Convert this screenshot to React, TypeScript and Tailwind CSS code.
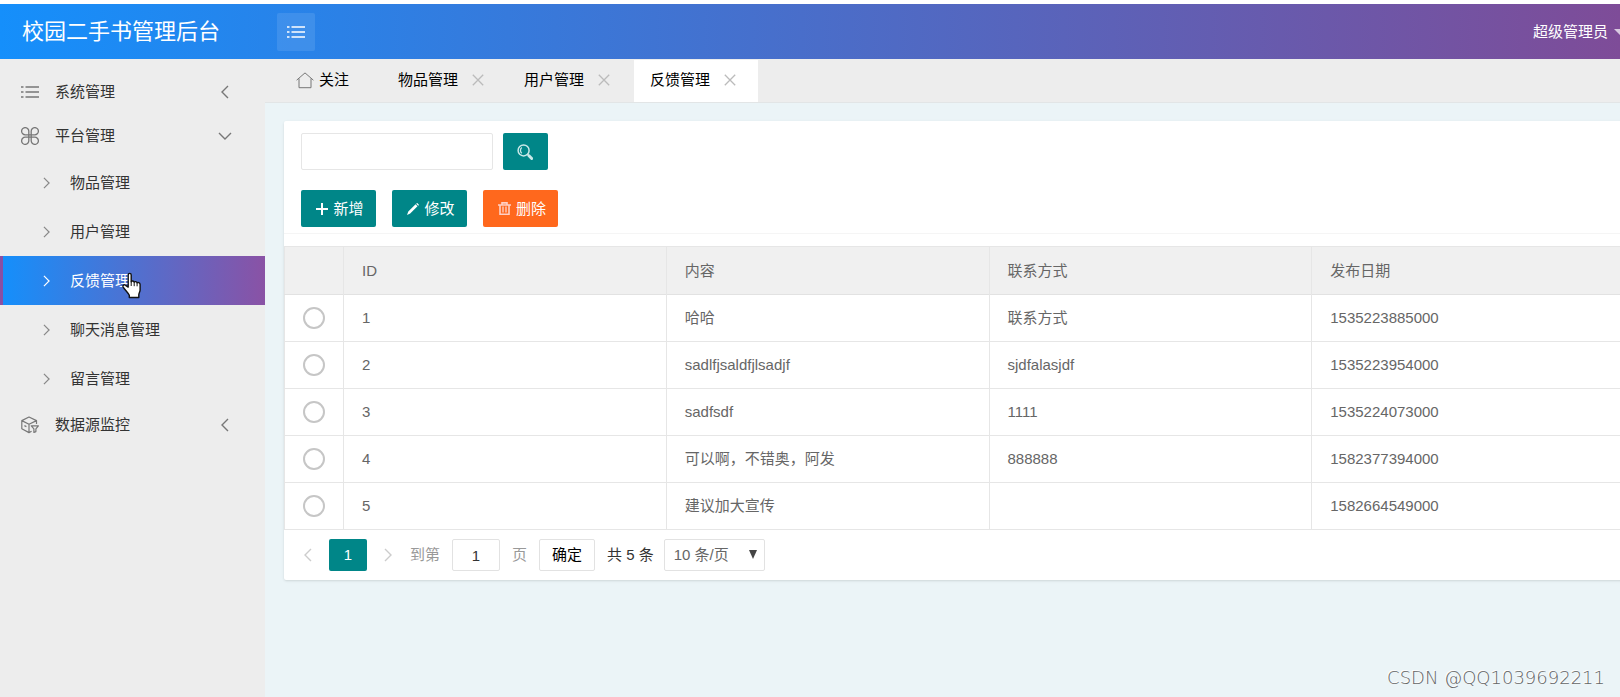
import React, { useState } from 'react';
import clsx from 'clsx';

const subMenus = ['物品管理', '用户管理', '反馈管理', '聊天消息管理', '留言管理'];

const tabs = ['物品管理', '用户管理', '反馈管理'];

const columns = ['ID', '内容', '联系方式', '发布日期'];

const rows = [
  { id: 1, content: '哈哈', contact: '联系方式', date: '1535223885000' },
  { id: 2, content: 'sadlfjsaldfjlsadjf', contact: 'sjdfalasjdf', date: '1535223954000' },
  { id: 3, content: 'sadfsdf', contact: '1111', date: '1535224073000' },
  { id: 4, content: '可以啊，不错奥，阿发', contact: '888888', date: '1582377394000' },
  { id: 5, content: '建议加大宣传', contact: '', date: '1582664549000' },
];

interface IconProps {
  className?: string;
}

const ListIcon = ({ className }: IconProps) => (
  <svg viewBox="0 0 18 14" fill="none" stroke="currentColor" className={className}>
    <path d="M0 2h2.500M0 7h2.500M0 12h2.500M4.500 2h13.500M4.500 7h13.500M4.500 12h13.500" strokeWidth="1.3" />
  </svg>
);

const CloverIcon = ({ className }: IconProps) => (
  <svg viewBox="0 0 18 18" fill="none" stroke="currentColor" strokeWidth="1.3" className={className}>
    <path d="M7.8 7.8V4.3A3.6 3.6 0 1 0 4.3 7.8H13.7A3.6 3.6 0 1 0 10.2 4.3V13.7A3.6 3.6 0 1 0 13.7 10.2H4.3A3.6 3.6 0 1 0 7.8 13.7V7.8" />
  </svg>
);

const CubeIcon = ({ className }: IconProps) => (
  <svg viewBox="0 0 18 18" fill="none" stroke="currentColor" strokeWidth="1.2" strokeLinejoin="round" className={className}>
    <path d="M15.5 8V4.6L8 1 .8 4.6v8.2L8 16.6l2.6-1.3M.8 4.6L8 8.3l7.5-3.7M8 8.3v8.3M3.4 9.6l2 1" />
    <path d="M10.3 9.8h7.1l-2.5 3v2.8l-2 .9v-3.7z" />
  </svg>
);

const HomeIcon = ({ className }: IconProps) => (
  <svg viewBox="0 0 18 17" fill="none" stroke="currentColor" strokeWidth="1" className={className}>
    <path d="M.6 8.2L9 .9l8.4 7.3M3 6.5v9.2h12V6.5" />
  </svg>
);

const Chevron = ({ className }: IconProps) => (
  <svg viewBox="0 0 8 14" fill="none" stroke="currentColor" strokeWidth="1.4" className={className}>
    <path d="M1 1l6 6-6 6" />
  </svg>
);

const CloseIcon = ({ className }: IconProps) => (
  <svg viewBox="0 0 12 12" fill="none" stroke="currentColor" strokeWidth="1.3" className={className}>
    <path d="M.8.8l10.4 10.4M11.2.8L.8 11.2" />
  </svg>
);

const SearchIcon = ({ className }: IconProps) => (
  <svg viewBox="0 0 16 16" fill="none" stroke="currentColor" className={className}>
    <circle cx="6.6" cy="6.4" r="5.5" strokeWidth="1.5" />
    <path d="M4.8 3.6a3.6 3.6 0 0 0 0 5.6" strokeWidth="1.3" />
    <path d="M10.6 10.400l1.400 1.400" strokeWidth="1.6" />
    <path d="M12 11.800l2.700 2.700" strokeWidth="3" strokeLinecap="round" />
  </svg>
);

const PlusIcon = ({ className }: IconProps) => (
  <svg viewBox="0 0 12 12" fill="none" stroke="currentColor" strokeWidth="2" className={className}>
    <path d="M6 0v12M0 6h12" />
  </svg>
);

const PencilIcon = ({ className }: IconProps) => (
  <svg viewBox="0 0 12 12" fill="currentColor" className={className}>
    <path d="M0 12l1.300-3.400L8.600 1.300l1.900 1.900-7.300 7.400zM9.200.7l.5-.5a.6.6 0 0 1 .8 0l1.200 1.200a.6.6 0 0 1 0 .8l-.5.500z" />
  </svg>
);

const TrashIcon = ({ className }: IconProps) => (
  <svg viewBox="0 0 13 13" fill="none" stroke="currentColor" strokeWidth="1.6" className={className}>
    <path d="M0 3h13M4 3V.9h5V3M2 3v9.200h9V3" />
    <path d="M5 4.500v6M8 4.500v6" strokeWidth="1.3" />
  </svg>
);

const HandCursor = ({ className }: IconProps) => (
  <svg viewBox="0 0 20 26" fill="#fff" stroke="#111" strokeWidth="1.4" strokeLinejoin="round" className={className}>
    <path d="M6.2 14.6V2.4a1.5 1.5 0 0 1 3 0v6.8c.3-1 2.7-1 3 .5.5-.9 2.5-.8 2.9.6.8-.6 3-.3 3 1.600v5.500c0 2-1.300 3.200-1.300 5V25H7.300v-2.200C6.300 20.500 3 17.500 1.200 14.600c-.9-1.700 1-2.900 2.400-1.800z" />
    <path d="M9.200 9v4.500M12.200 9.700v4M15.100 10.300v3.500" strokeWidth="1" />
  </svg>
);

const Header = () => (
  <header className="mt-1 flex h-[55px] items-center overflow-hidden bg-linear-to-r/srgb from-[#158ffb] to-[#7e4c98] text-white">
    <h1 className="w-[277px] shrink-0 pl-[22px] text-[22px]">校园二手书管理后台</h1>
    <button type="button" aria-label="菜单" className="flex size-[38px] items-center justify-center rounded-xs bg-white/10">
      <ListIcon className="h-3.5 w-[18px]" />
    </button>
    <button type="button" className="-mr-1.5 ml-auto flex shrink-0 items-center gap-1.5">
      超级管理员
      <svg viewBox="0 0 12 6" fill="currentColor" className="h-1.5 w-3 opacity-70">
        <path d="M0 0h12L6 6z" />
      </svg>
    </button>
  </header>
);

interface MenuItemProps {
  icon: React.ReactNode;
  title: string;
  open?: boolean;
}

const MenuItem = ({ icon, title, open }: MenuItemProps) => (
  <button type="button" aria-expanded={!!open} className="flex h-11 w-full items-center pr-[33px] pl-[21px] text-[#333]">
    <span className="mr-3.5 w-5 text-[#777]">{icon}</span>
    {title}
    <span className="ml-auto flex w-3.5 justify-center text-[#777]">
      <Chevron className={clsx('h-3.5 w-2', open ? 'rotate-90' : 'rotate-180')} />
    </span>
  </button>
);

const Sidebar = () => {
  const [active, setActive] = useState('反馈管理');

  return (
    <nav className="w-[265px] shrink-0 bg-[#ededed] pt-[11px]">
      <MenuItem icon={<ListIcon className="h-3.5 w-[18px]" />} title="系统管理" />
      <MenuItem icon={<CloverIcon className="size-[18px]" />} title="平台管理" open />
      <ul>
        {subMenus.map((name) => (
          <li key={name} className="relative">
            <button
              type="button"
              onClick={() => setActive(name)}
              className={clsx(
                'flex h-[49px] w-full items-center gap-5 border-l-3 pl-10',
                name === active
                  ? 'border-[#8a4fa3] bg-linear-to-r/srgb from-[#158ffb] to-[#8a52a5] text-white'
                  : 'border-transparent text-[#333]'
              )}
            >
              <Chevron className={clsx('h-3 w-[7px]', name === active ? 'text-white' : 'text-[#888]')} />
              {name}
            </button>
            {name === '反馈管理' && (
              <HandCursor className="pointer-events-none absolute top-4 left-[122px] h-[27px] w-5" />
            )}
          </li>
        ))}
      </ul>
      <MenuItem icon={<CubeIcon className="size-[18px]" />} title="数据源监控" />
    </nav>
  );
};

const TabBar = () => (
  <div className="flex h-11 items-end gap-0.5 border-b border-[#e2e5e6] bg-[#ededed] pl-[15px] text-black">
    <button type="button" className="flex h-[42px] items-center gap-[5px] pr-[31px] pb-0.5 pl-4">
      <HomeIcon className="h-[17px] w-[18px] text-[#777]" />
      关注
    </button>
    {tabs.map((name) => (
      <div
        key={name}
        className={clsx(
          'flex h-[42px] items-center gap-3.5 pr-[22px] pb-0.5 pl-4',
          name === '反馈管理' && 'bg-white'
        )}
      >
        <button type="button">{name}</button>
        <button type="button" aria-label={`关闭${name}`} className="text-[#bbb]">
          <CloseIcon className="size-3" />
        </button>
      </div>
    ))}
  </div>
);

const Toolbar = () => (
  <div className="border-b border-[#f5f5f5] px-[17px] pt-3 pb-1.5">
    <form className="flex gap-2.5" onSubmit={(e) => e.preventDefault()}>
      <input
        type="text"
        aria-label="搜索"
        className="h-[37px] w-48 rounded-xs border border-[#e6e6e6] px-2.5 outline-none"
      />
      <button
        type="submit"
        aria-label="查询"
        className="flex h-[37px] w-[45px] items-center justify-center rounded-xs bg-[#008688] pr-0.5 text-[#c9e8e8]"
      >
        <SearchIcon className="size-4" />
      </button>
    </form>
    <div className="mt-5 flex gap-4 text-white">
      <button type="button" className="flex h-[37px] w-[75px] items-center justify-center gap-[5px] rounded-xs bg-[#008688] pl-[3px]">
        <PlusIcon className="size-3" />
        新增
      </button>
      <button type="button" className="flex h-[37px] w-[75px] items-center justify-center gap-[5px] rounded-xs bg-[#008688] pl-[3px]">
        <PencilIcon className="size-3" />
        修改
      </button>
      <button type="button" className="flex h-[37px] w-[75px] items-center justify-center gap-[5px] rounded-xs bg-[#ff681d] pl-[3px]">
        <TrashIcon className="size-[13px] text-[#ffd0c5]" />
        删除
      </button>
    </div>
  </div>
);

const DataTable = () => (
  <table className="mt-3 w-full table-fixed border-collapse border border-[#e6e6e6] text-left text-[#666]">
    <thead>
      <tr className="h-12 border-b border-[#e2e2e2] bg-[#f0f0f0]">
        <th className="w-[59px] border-r border-[#e6e6e6]" />
        {columns.map((col) => (
          <th key={col} className="border-r border-[#e6e6e6] px-[18px] font-normal">
            {col}
          </th>
        ))}
      </tr>
    </thead>
    <tbody>
      {rows.map((row) => (
        <tr key={row.id} className="h-[47px] border-b border-[#e6e6e6]">
          <td className="border-r border-[#e6e6e6]">
            <input
              type="radio"
              name="row"
              aria-label={`选择 ${row.id}`}
              className="mx-auto block size-[22px] appearance-none rounded-full border-2 border-[#c6c6c6] checked:border-[#008688]"
            />
          </td>
          <td className="border-r border-[#e6e6e6] px-[18px]">{row.id}</td>
          <td className="border-r border-[#e6e6e6] px-[18px]">{row.content}</td>
          <td className="border-r border-[#e6e6e6] px-[18px]">{row.contact}</td>
          <td className="border-r border-[#e6e6e6] px-[18px]">{row.date}</td>
        </tr>
      ))}
    </tbody>
  </table>
);

const Pagination = () => (
  <div className="flex h-[50px] items-center pl-5 text-[#333]">
    <button type="button" aria-label="上一页" className="text-[#ccc]">
      <Chevron className="h-3.5 w-2 rotate-180" />
    </button>
    <button type="button" className="mx-[17px] h-8 w-[38px] rounded-xs bg-[#008688] text-white">
      1
    </button>
    <button type="button" aria-label="下一页" className="text-[#ccc]">
      <Chevron className="h-3.5 w-2" />
    </button>
    <label className="ml-[18px] flex items-center gap-3 text-[#999]">
      到第
      <input
        type="text"
        defaultValue="1"
        className="h-8 w-12 rounded-xs border border-[#e2e2e2] text-center text-[#333] outline-none"
      />
      页
    </label>
    <button type="button" className="ml-3 h-8 w-14 rounded-xs border border-[#e2e2e2] text-black">
      确定
    </button>
    <span className="ml-3 text-[#333]">共 5 条</span>
    <div className="relative ml-2.5">
      <select
        aria-label="每页条数"
        className="block h-8 w-[101px] appearance-none rounded-xs border border-[#e2e2e2] bg-white pl-[9px] text-[#666] outline-none"
      >
        <option>10 条/页</option>
        <option>20 条/页</option>
        <option>50 条/页</option>
      </select>
      <svg viewBox="0 0 8 9" fill="#444" className="pointer-events-none absolute top-[11px] right-2 h-[9px] w-2">
        <path d="M0 0h8L4 9z" />
      </svg>
    </div>
  </div>
);

export default function App() {
  return (
    <div className="flex min-h-screen flex-col bg-white font-['Liberation_Sans','Noto_Sans_CJK_SC',sans-serif] text-[15px] leading-5">
      <Header />
      <div className="flex flex-1">
        <Sidebar />
        <div className="relative flex min-w-0 flex-1 flex-col overflow-hidden bg-[#ebf4f7]">
          <TabBar />
          <main className="mt-[18px] -mr-[15px] ml-[19px] rounded-xs bg-white shadow-sm">
            <Toolbar />
            <DataTable />
            <Pagination />
          </main>
          <p className="absolute right-[15px] bottom-[9px] font-['DejaVu_Sans',sans-serif] text-lg leading-5 font-extralight text-[#666] text-shadow-[-1px_-1px_0_#fff]">
            CSDN @QQ1039692211
          </p>
        </div>
      </div>
    </div>
  );
}
